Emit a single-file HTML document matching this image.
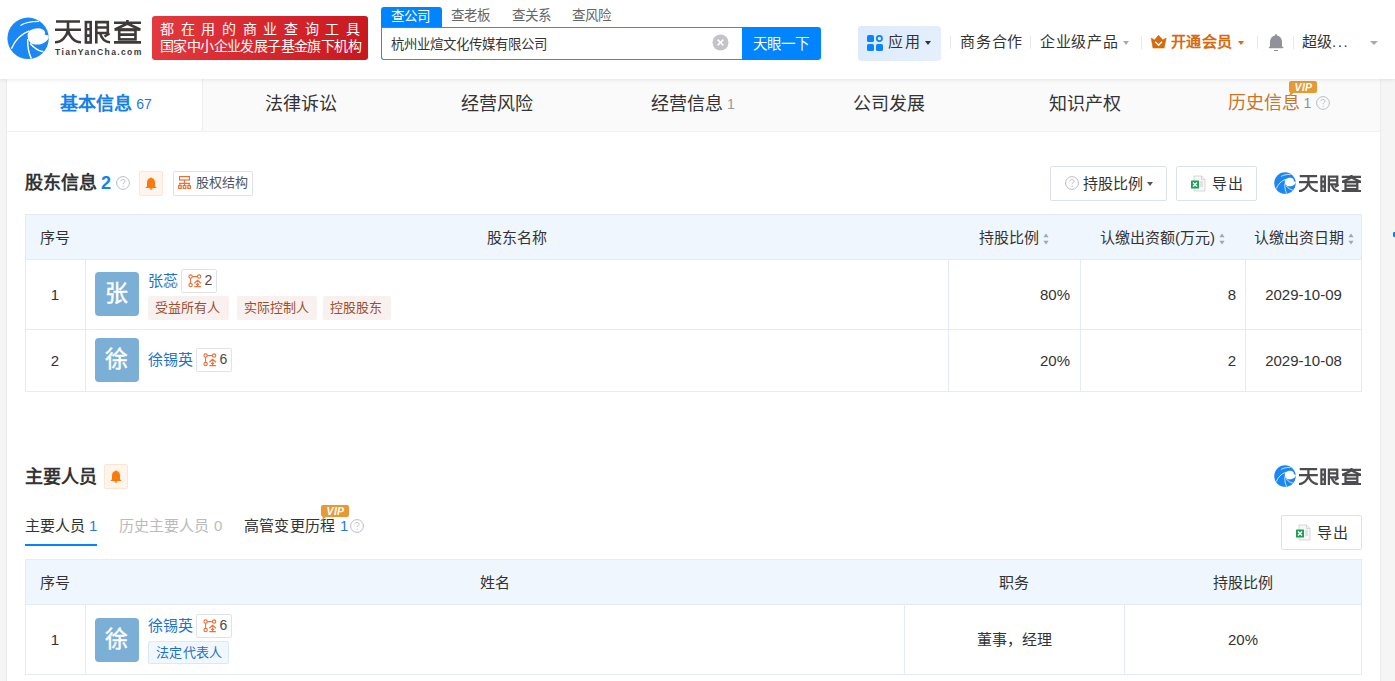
<!DOCTYPE html>
<html lang="zh-CN"><head><meta charset="utf-8">
<style>
*{box-sizing:border-box;margin:0;padding:0}
html,body{width:1395px;height:681px;overflow:hidden;background:#f5f5f5;font-family:"Liberation Sans",sans-serif;color:#333}
.abs{position:absolute}
#hdr{position:absolute;left:0;top:0;width:1395px;height:79px;background:#fff;box-shadow:0 1px 4px rgba(0,0,0,.09);z-index:5}
#card{position:absolute;left:6px;top:79px;width:1375px;height:610px;background:#fff;border-left:1px solid #ebebeb;border-right:1px solid #ebebeb}
.tabs{position:absolute;left:0;top:0;width:1373px;height:53px;background:#fafafa;border-bottom:1px solid #f0f0f0}
.tab{position:absolute;top:0;height:52px;line-height:50px;text-align:center;font-size:18px;color:#333}
.tab sup{font-size:14px;color:#999;vertical-align:top;position:relative;top:0px;margin-left:4px}
.sec-title{position:absolute;font-size:18px;font-weight:bold;color:#333;line-height:24px}
.btn{position:absolute;border:1px solid #e0e0e0;border-radius:2px;background:#fff;font-size:15px;color:#333}
table{border-collapse:collapse;position:absolute;table-layout:fixed}
td,th{border:1px solid #e6eef6;font-weight:normal;font-size:15px;color:#333}
th{background:#eff6fd}
.avatar{position:absolute;width:44px;height:44px;border-radius:4px;background:#7bafd6;color:#fff;font-size:23px;text-align:center;line-height:43px;padding-right:2px;-webkit-text-stroke:0.4px #fff}
.name{position:absolute;font-size:15px;color:#2272c8;line-height:20px}
.badge{position:absolute;height:23.5px;border:1px solid #dfe3e8;border-radius:2px;background:#fff;font-size:14px;color:#4a4a4a;line-height:21.5px;padding-left:22.5px;padding-right:4px}
.cell{position:absolute;font-size:15px;line-height:20px;color:#333;white-space:nowrap}
.sort{display:inline-block;width:6px;height:11px;margin-left:4px;vertical-align:-1px;background:linear-gradient(#fff0,#fff0)}
.tag{position:absolute;height:23.5px;line-height:23px;font-size:13px;padding:0 7px;border-radius:2px;background:#f9f1ef;color:#9a4f2e;white-space:nowrap}
</style></head><body>
<svg width="0" height="0" style="position:absolute"><defs>
<clipPath id="lgclip"><circle cx="23.1" cy="23.3" r="20.7"/></clipPath>
<g id="lgc"><circle cx="23.1" cy="23.3" r="20.7" fill="#1b87f5"/>
<g clip-path="url(#lgclip)">
<path d="M24.3 15.9 C26 14.5 30 13.2 33.8 13.2 C37 13.4 39.8 15.5 40.2 17.5 L39.5 19.6 L44.5 20.8 L44.5 22.3 C43.5 24 41 27.5 36.5 29 C33 30 28 29.8 25.7 28 C23.8 26.5 22.6 23.5 22.6 20.8 C22.6 18.5 23.3 17 24.3 15.9 Z" fill="#fff"/>
<g stroke="#fff" stroke-width="1.45" fill="none">
<path d="M15.5 10.5 C19 8 26 6.5 34 6.4"/>
<path d="M6.4 33.8 C10 25 16 19 24.3 15.9"/>
<path d="M22.7 24 C22.5 32 23.5 38 26.4 43.6"/>
<path d="M25.2 28.5 C29 33 33.5 36 38.5 36.8"/></g>
</g></g>
<g id="lgt" fill="none">
<path d="M56 21.5 H80 M55 29.7 H81 M68 21.5 V30"/>
<path d="M68 30 C67 36 62 42.3 55 42.3"/>
<path d="M68 30 C69 36 74 42.3 81 42.3"/>
<rect x="85.9" y="22.1" width="4.8" height="20.4"/>
<path d="M86 29.3 H90.6 M86 35.6 H90.6"/>
<path d="M96.3 43.5 V22.1 H107.8 V33 H96.3 M96.3 27.5 H107.8"/>
<path d="M100 33 C101.5 38 105 42.3 110 42.3"/>
<path d="M104.5 36.5 L109.5 33.5"/>
<path d="M114 22.7 H141 M127.4 20 V24"/>
<path d="M127.4 23.5 L115 29.5 M127.4 23.5 L140 29.5"/>
<path d="M114.5 29.5 H140.5"/>
<rect x="119.2" y="30" width="16.3" height="9.4"/>
<path d="M119.2 34.6 H135.5 M114 42.4 H141"/>
</g>
<g id="iq"><circle cx="7" cy="7" r="6.4" fill="none" stroke="#b8bdc5" stroke-width="1"/><path d="M5 5.3 C5 4 6 3.4 7 3.4 C8.1 3.4 9 4.1 9 5.2 C9 6.5 7.2 6.7 7.2 8.2" fill="none" stroke="#b8bdc5" stroke-width="1"/><circle cx="7.2" cy="10.2" r="0.65" fill="#b8bdc5"/></g>
<g id="ibell"><path d="M6 0.3 C6.5 0.3 6.6 0.6 6.6 1 C8.9 1.4 10 3.3 10 5.5 V9.2 L11.5 10.7 V11 H0.5 V10.7 L2 9.2 V5.5 C2 3.3 3.1 1.4 5.4 1 C5.4 0.6 5.5 0.3 6 0.3Z" fill="#fd7a0a"/><path d="M4.5 11.3 H7.5 C7.5 12.2 6.8 12.8 6 12.8 C5.2 12.8 4.5 12.2 4.5 11.3Z" fill="#fd7a0a"/></g>
<g id="ixls"><path d="M4 1 H11.5 L15 4.5 V16 H4 Z" fill="#f7f7f7" stroke="#cfcfcf" stroke-width="0.8"/><path d="M11.5 1 V4.5 H15" fill="none" stroke="#cfcfcf" stroke-width="0.8"/><path d="M10 7 H13 M10 9 H13 M10 11 H13" stroke="#c4c4c4" stroke-width="0.8"/><rect x="1" y="5.5" width="8" height="8" rx="0.5" fill="#1f9e5a"/><path d="M3 7.5 L7 11.5 M7 7.5 L3 11.5" stroke="#fff" stroke-width="1.3"/></g>
<g id="ibadge" fill="none" stroke="#e8743b" stroke-width="1.1"><circle cx="2.6" cy="2.6" r="1.7"/><circle cx="11.1" cy="2.6" r="1.7"/><circle cx="2.6" cy="11.1" r="1.7"/><path d="M4.3 2.6 H9.4 M2.6 4.3 V9.4"/><path d="M6.3 9.3 L9.6 6.4 L12.9 9.3 M9.6 8.5 V12.4 M8 10.4 H11.2 M6.3 12.6 H12.9" stroke-width="1.2"/></g>
<g id="istruct" fill="none" stroke="#e5743a" stroke-width="1.2"><rect x="1.6" y="0.6" width="9.8" height="3.4"/><path d="M6.5 4 V7.2 M1 7.4 H12"/><rect x="0.6" y="9.6" width="2.6" height="2.8"/><rect x="5.2" y="9.6" width="2.6" height="2.8"/><rect x="9.8" y="9.6" width="2.6" height="2.8"/><path d="M1.9 7.4 V9.6 M6.5 7.4 V9.6 M11.1 7.4 V9.6"/></g>
<g id="ivip"><path d="M2 0 H26 Q28 0 28 2 V10 Q28 12 26 12 H4.5 L1.8 15 L1.5 11.6 Q0 11 0 9.5 V2 Q0 0 2 0Z" fill="#e59a36"/><text x="14.5" y="10" font-size="10.5" font-weight="bold" font-style="italic" text-anchor="middle" fill="#fff" font-family="Liberation Sans" letter-spacing="0.3">VIP</text></g>
</defs></svg>
<div id="hdr">
  <svg class="abs" style="left:4.8px;top:14.85px" width="46" height="46" viewBox="0 0 46 46"><use href="#lgc"/></svg>
  <svg class="abs" style="left:55px;top:20px" width="86" height="24" viewBox="55 20 86 24"><use href="#lgt" stroke="#3e3a39" stroke-width="2.6"/></svg>
  <svg class="abs" style="left:55px;top:47px" width="87" height="10" viewBox="55 47 87 10"><text x="55" y="55.3" font-family="Liberation Sans" font-weight="bold" font-size="8.6" fill="#3e3a39" textLength="86.3" lengthAdjust="spacing">TianYanCha.com</text></svg>
  <div class="abs" style="left:152px;top:16px;width:216px;height:44px;border-radius:3px;background:linear-gradient(100deg,#e3393f,#c8181e)"></div>
  <div class="abs" style="left:160px;top:20px;width:200px;font-size:14px;color:#fff;line-height:18px;text-align:justify;text-align-last:justify">都在用的商业查询工具</div>
  <div class="abs" style="left:160px;top:37px;width:202px;font-size:14px;color:#fff;line-height:18px;white-space:nowrap;letter-spacing:-0.6px">国家中小企业发展子基金旗下机构</div>
  <!-- search -->
  <div class="abs" style="left:381px;top:7px;width:61px;height:21px;background:#0084ff;border-radius:3px 3px 0 0"></div>
  <div class="abs" style="left:391px;top:7px;font-size:13.5px;color:#fff;line-height:20px;font-weight:500">查公司</div>
  <div class="abs" style="left:451px;top:6px;font-size:13.5px;color:#666;line-height:20px">查老板</div>
  <div class="abs" style="left:512px;top:6px;font-size:13.5px;color:#666;line-height:20px">查关系</div>
  <div class="abs" style="left:572px;top:6px;font-size:13.5px;color:#666;line-height:20px">查风险</div>
  <div class="abs" style="left:381px;top:27px;width:362px;height:33px;border:1px solid #2a8ee8;border-right:none;border-radius:0 0 0 3px;background:#fff"></div>
  <div class="abs" style="left:391px;top:35px;font-size:13.4px;color:#333;line-height:20px">杭州业煊文化传媒有限公司</div>
  <svg class="abs" style="left:712px;top:34px" width="17" height="17" viewBox="0 0 17 17"><circle cx="8.5" cy="8.5" r="8" fill="#c4c4c8"/><path d="M5.6 5.6 L11.4 11.4 M11.4 5.6 L5.6 11.4" stroke="#fff" stroke-width="1.5"/></svg>
  <div class="abs" style="left:742px;top:27px;width:79px;height:33px;background:#0084ff;border-radius:0 3px 3px 0"></div>
  <div class="abs" style="left:752.5px;top:33.5px;font-size:14.5px;color:#fff;line-height:20px">天眼一下</div>
  <!-- nav -->
  <div class="abs" style="left:858px;top:26px;width:83px;height:35px;background:linear-gradient(120deg,#dceafb,#e6f0fc);border-radius:3px"></div>
  <svg class="abs" style="left:867px;top:35px" width="16" height="16" viewBox="0 0 16 16"><rect x="0" y="0" width="7" height="7" rx="1.6" fill="#0a84ff"/><circle cx="12.4" cy="3.5" r="2.6" fill="none" stroke="#0a84ff" stroke-width="1.7"/><rect x="0" y="9" width="7" height="7" rx="1.6" fill="#0a84ff"/><rect x="9" y="9" width="7" height="7" rx="1.6" fill="#0a84ff"/></svg>
  <div class="abs" style="left:888px;top:32px;font-size:15px;color:#333;line-height:20px;letter-spacing:1.5px">应用</div>
  <div class="abs" style="left:924.5px;top:41px;width:0;height:0;border-left:3.5px solid transparent;border-right:3.5px solid transparent;border-top:4px solid #333"></div>
  <div class="abs" style="left:950px;top:36px;width:1px;height:13px;background:#e8e8ec"></div>
  <div class="abs" style="left:960px;top:32px;font-size:15px;color:#333;line-height:20px;letter-spacing:0.8px">商务合作</div>
  <div class="abs" style="left:1030px;top:36px;width:1px;height:13px;background:#e8e8ec"></div>
  <div class="abs" style="left:1040px;top:32px;font-size:15px;color:#333;line-height:20px;letter-spacing:0.7px">企业级产品</div>
  <div class="abs" style="left:1123px;top:41px;width:0;height:0;border-left:3.5px solid transparent;border-right:3.5px solid transparent;border-top:4px solid #aaa"></div>
  <div class="abs" style="left:1141px;top:36px;width:1px;height:13px;background:#e8e8ec"></div>
  <svg class="abs" style="left:1150px;top:34px" width="18" height="15" viewBox="0 0 18 15"><path d="M1.2 4.1 L4.5 5.9 L8.6 1.2 L12.7 5.9 L16.2 4.1 L14.1 14 L3 14 Z" fill="#d8690c" stroke="#d8690c" stroke-width="0.6" stroke-linejoin="round"/><path d="M5.2 7.8 L8.6 11.2 L12 7.8" stroke="#fff" stroke-width="1.4" fill="none"/></svg>
  <div class="abs" style="left:1171px;top:32px;font-size:15px;color:#d8690c;font-weight:bold;line-height:20px;letter-spacing:0.3px">开通会员</div>
  <div class="abs" style="left:1238px;top:41px;width:0;height:0;border-left:3.5px solid transparent;border-right:3.5px solid transparent;border-top:4px solid #d8690c"></div>
  <div class="abs" style="left:1257px;top:36px;width:1px;height:13px;background:#e8e8ec"></div>
  <svg class="abs" style="left:1268px;top:34px" width="16" height="18" viewBox="0 0 16 18"><rect x="7.2" y="0.2" width="1.7" height="2" fill="#8f9399"/><path d="M2 13.2 V8 C2 4.2 4.6 1.5 8 1.5 C11.4 1.5 14 4.2 14 8 V13.2 Z" fill="#8f9399"/><rect x="0.8" y="12.8" width="14.7" height="1.4" rx="0.6" fill="#8f9399"/><rect x="6" y="16" width="4" height="1" fill="#8f9399"/></svg>
  <div class="abs" style="left:1293px;top:36px;width:1px;height:13px;background:#e8e8ec"></div>
  <div class="abs" style="left:1302px;top:32px;font-size:15px;color:#333;line-height:20px">超级<span style="letter-spacing:1.6px">...</span></div>
  <div class="abs" style="left:1369.5px;top:41px;width:0;height:0;border-left:4px solid transparent;border-right:4px solid transparent;border-top:4px solid #aaa"></div>
</div>

<div class="abs" style="left:1393px;top:232px;width:3px;height:5px;background:#0084ff;border-radius:1px"></div>

<div id="card"></div>
<div class="abs" style="left:7px;top:79px;width:1373px;height:52px">
  <div class="tabs">
    <div class="tab" style="left:0;width:196px;padding-left:3px;border-right:1px solid #eeeeee;background:#fff;color:#1580e6;font-weight:bold">基本信息<sup style="color:#1a7ad8;font-weight:normal">67</sup></div>
    <div class="tab" style="left:196px;width:196px">法律诉讼</div>
    <div class="tab" style="left:392px;width:196px">经营风险</div>
    <div class="tab" style="left:588px;width:196px">经营信息<sup>1</sup></div>
    <div class="tab" style="left:784px;width:196px">公司发展</div>
    <div class="tab" style="left:980px;width:196px">知识产权</div>
    <div class="tab" style="left:1176px;width:197px"></div>
  </div>
</div>


<div class="abs" style="left:1228px;top:90px;font-size:18px;line-height:26px;color:#c8762a">历史信息</div>
<div class="abs" style="left:1303.5px;top:94px;font-size:14px;line-height:18px;color:#8c9199">1</div>
<svg class="abs" style="left:1316px;top:96px" width="14" height="14" viewBox="0 0 14 14"><use href="#iq"/></svg>
<svg class="abs" style="left:1289px;top:81px" width="28" height="16" viewBox="0 0 28 16"><path d="M2 0 H26 Q28 0 28 2 V10 Q28 12 26 12 H4.5 L0.5 15.5 L1.2 11.6 Q0 11 0 9.5 V2 Q0 0 2 0Z" fill="#e59a36"/><text x="14.5" y="10" font-size="10.5" font-weight="bold" font-style="italic" text-anchor="middle" fill="#fff" font-family="Liberation Sans" letter-spacing="0.3">VIP</text></svg>
<!-- 股东信息 -->
<div class="sec-title" style="left:24.5px;top:171px">股东信息</div>
<div class="abs" style="left:101px;top:171px;font-size:18px;font-weight:bold;color:#1580e6;line-height:24px">2</div>
<svg class="abs" style="left:115.5px;top:175.5px" width="14" height="14" viewBox="0 0 14 14"><use href="#iq"/></svg>
<div class="abs" style="left:139px;top:171px;width:24px;height:24.5px;background:#fff5ec;border:1px solid #fbe6d4;border-radius:2px"></div><svg class="abs" style="left:145px;top:176.5px" width="12" height="13" viewBox="0 0 12 13"><use href="#ibell"/></svg>
<div class="btn" style="left:172.5px;top:171px;width:80.5px;height:24.5px;font-size:13px;line-height:22.5px;padding-left:22px;color:#4e5561;border-color:#dde2ea">股权结构</div>
<svg class="abs" style="left:178px;top:176px" width="13" height="13" viewBox="0 0 13 13"><use href="#istruct"/></svg>
<div class="btn" style="left:1050px;top:166px;width:117px;height:35px;line-height:33px;padding-left:32px;border-color:#dde2ea">持股比例</div>
<svg class="abs" style="left:1065px;top:176px" width="14" height="14" viewBox="0 0 14 14"><use href="#iq"/></svg>
<div class="abs" style="left:1147px;top:182px;width:0;height:0;border-left:3.5px solid transparent;border-right:3.5px solid transparent;border-top:4px solid #555"></div>
<div class="btn" style="left:1176px;top:166px;width:81px;height:35px;line-height:33px;padding-left:35px;letter-spacing:1px;border-color:#dde2ea">导出</div>
<svg class="abs" style="left:1190px;top:175px" width="16" height="17" viewBox="0 0 16 17"><use href="#ixls"/></svg>
<svg class="abs" style="left:1272.7px;top:170.9px" width="23.9" height="23.9" viewBox="0 0 46 46"><use href="#lgc"/></svg><svg class="abs" style="left:1299px;top:174.5px" width="62.3" height="17.4" viewBox="55 20 86 24"><use href="#lgt" stroke="#4d4d50" stroke-width="3.1"/></svg>
<div class="abs" style="left:25px;top:214px;width:1337px;height:178px;border:1px solid #e3ebf3"></div>
<div class="abs" style="left:26px;top:215px;width:1335px;height:44px;background:#eff6fd"></div>
<div class="abs" style="left:26px;top:259px;width:1335px;height:1px;background:#e3ebf3"></div>
<div class="abs" style="left:26px;top:329px;width:1335px;height:1px;background:#e3ebf3"></div>
<div class="abs" style="left:85px;top:260px;width:1px;height:131px;background:#e3ebf3"></div>
<div class="abs" style="left:948px;top:260px;width:1px;height:131px;background:#e3ebf3"></div>
<div class="abs" style="left:1080px;top:260px;width:1px;height:131px;background:#e3ebf3"></div>
<div class="abs" style="left:1245px;top:260px;width:1px;height:131px;background:#e3ebf3"></div>
<div class="cell" style="left:40px;top:228px">序号</div>
<div class="cell" style="left:85px;top:228px;width:863px;text-align:center">股东名称</div>
<div class="cell" style="left:948px;top:228px;width:132px;text-align:center">持股比例<svg width="6" height="12" viewBox="0 0 6 12" style="margin-left:4px;vertical-align:-1.5px"><path d="M3 0.5 L5.6 4.3 H0.4Z M3 11.5 L5.6 7.7 H0.4Z" fill="#a3a8b0"/></svg></div>
<div class="cell" style="left:1080px;top:228px;width:165px;text-align:center">认缴出资额(万元)<svg width="6" height="12" viewBox="0 0 6 12" style="margin-left:4px;vertical-align:-1.5px"><path d="M3 0.5 L5.6 4.3 H0.4Z M3 11.5 L5.6 7.7 H0.4Z" fill="#a3a8b0"/></svg></div>
<div class="cell" style="left:1245px;top:228px;width:117px;text-align:center">认缴出资日期<svg width="6" height="12" viewBox="0 0 6 12" style="margin-left:4px;vertical-align:-1.5px"><path d="M3 0.5 L5.6 4.3 H0.4Z M3 11.5 L5.6 7.7 H0.4Z" fill="#a3a8b0"/></svg></div>
<div class="cell" style="left:25px;top:285px;width:60px;text-align:center">1</div>
<div class="avatar" style="left:95px;top:272px">张</div>
<div class="name" style="left:148px;top:271px">张蕊</div>
<div class="badge" style="left:181px;top:269px">2</div><svg class="abs" style="left:187.5px;top:274px" width="14" height="14" viewBox="0 0 14 14"><use href="#ibadge"/></svg>
<div class="tag" style="left:148px;top:296px;width:80.5px">受益所有人</div>
<div class="tag" style="left:236.5px;top:296px;width:80px">实际控制人</div>
<div class="tag" style="left:323px;top:296px;width:67.7px">控股股东</div>
<div class="cell" style="left:948px;top:285px;width:122px;text-align:right">80%</div>
<div class="cell" style="left:1080px;top:285px;width:156px;text-align:right">8</div>
<div class="cell" style="left:1245px;top:285px;width:117px;text-align:center">2029-10-09</div>
<div class="cell" style="left:25px;top:351px;width:60px;text-align:center">2</div>
<div class="avatar" style="left:95px;top:338px">徐</div>
<div class="name" style="left:148px;top:350px">徐锡英</div>
<div class="badge" style="left:196px;top:348px">6</div><svg class="abs" style="left:202.5px;top:353px" width="14" height="14" viewBox="0 0 14 14"><use href="#ibadge"/></svg>
<div class="cell" style="left:948px;top:351px;width:122px;text-align:right">20%</div>
<div class="cell" style="left:1080px;top:351px;width:156px;text-align:right">2</div>
<div class="cell" style="left:1245px;top:351px;width:117px;text-align:center">2029-10-08</div>
<!-- 主要人员 -->
<div class="sec-title" style="left:24.5px;top:465px">主要人员</div>
<div class="abs" style="left:104px;top:464px;width:24px;height:24.5px;background:#fff5ec;border:1px solid #fbe6d4;border-radius:2px"></div><svg class="abs" style="left:110px;top:469.5px" width="12" height="13" viewBox="0 0 12 13"><use href="#ibell"/></svg>
<svg class="abs" style="left:1272.7px;top:463.9px" width="23.9" height="23.9" viewBox="0 0 46 46"><use href="#lgc"/></svg><svg class="abs" style="left:1299px;top:467.5px" width="62.3" height="17.4" viewBox="55 20 86 24"><use href="#lgt" stroke="#4d4d50" stroke-width="3.1"/></svg>
<div class="abs" style="left:25px;top:516px;font-size:15px;line-height:20px;color:#333">主要人员<span style="color:#2a7bd5;margin-left:4px">1</span></div>
<div class="abs" style="left:25px;top:544px;width:72px;height:2px;background:#0084ff"></div>
<div class="abs" style="left:119px;top:516px;font-size:15px;line-height:20px;color:#bbb">历史主要人员<span style="margin-left:5px">0</span></div>
<div class="abs" style="left:243.5px;top:516px;font-size:15px;line-height:20px;color:#333;letter-spacing:0.35px">高管变更历程<span style="color:#2a7bd5;margin-left:4.5px">1</span></div>
<svg class="abs" style="left:350px;top:519px" width="14" height="14" viewBox="0 0 14 14"><use href="#iq"/></svg>
<svg class="abs" style="left:320.5px;top:505px" width="28" height="15" viewBox="0 0 28 15"><use href="#ivip"/></svg>
<div class="btn" style="left:1281px;top:515px;width:81px;height:35px;line-height:33px;padding-left:35px;letter-spacing:1px;border-color:#dde2ea">导出</div>
<svg class="abs" style="left:1295px;top:524px" width="16" height="17" viewBox="0 0 16 17"><use href="#ixls"/></svg>
<div class="abs" style="left:25px;top:559px;width:1337px;height:116px;border:1px solid #e3ebf3"></div>
<div class="abs" style="left:26px;top:560px;width:1335px;height:44px;background:#eff6fd"></div>
<div class="abs" style="left:26px;top:604px;width:1335px;height:1px;background:#e3ebf3"></div>
<div class="abs" style="left:85px;top:605px;width:1px;height:69px;background:#e3ebf3"></div>
<div class="abs" style="left:904px;top:605px;width:1px;height:69px;background:#e3ebf3"></div>
<div class="abs" style="left:1124px;top:605px;width:1px;height:69px;background:#e3ebf3"></div>
<div class="cell" style="left:40px;top:573px">序号</div>
<div class="cell" style="left:85px;top:573px;width:819px;text-align:center">姓名</div>
<div class="cell" style="left:904px;top:573px;width:220px;text-align:center">职务</div>
<div class="cell" style="left:1124px;top:573px;width:238px;text-align:center">持股比例</div>
<div class="cell" style="left:25px;top:630px;width:60px;text-align:center">1</div>
<div class="avatar" style="left:95px;top:618px">徐</div>
<div class="name" style="left:148px;top:616px">徐锡英</div>
<div class="badge" style="left:196px;top:614px">6</div><svg class="abs" style="left:202.5px;top:619px" width="14" height="14" viewBox="0 0 14 14"><use href="#ibadge"/></svg>
<div class="tag" style="left:148px;top:641.2px;width:80.6px;height:23.3px;background:#f1f7fe;border:1px solid #dce8f6;color:#1f6fc6;line-height:21px;padding:0 0 0 7px;letter-spacing:0.3px">法定代表人</div>
<div class="cell" style="left:904px;top:630px;width:220px;text-align:center">董事，经理</div>
<div class="cell" style="left:1124px;top:630px;width:238px;text-align:center">20%</div>
</body></html>
